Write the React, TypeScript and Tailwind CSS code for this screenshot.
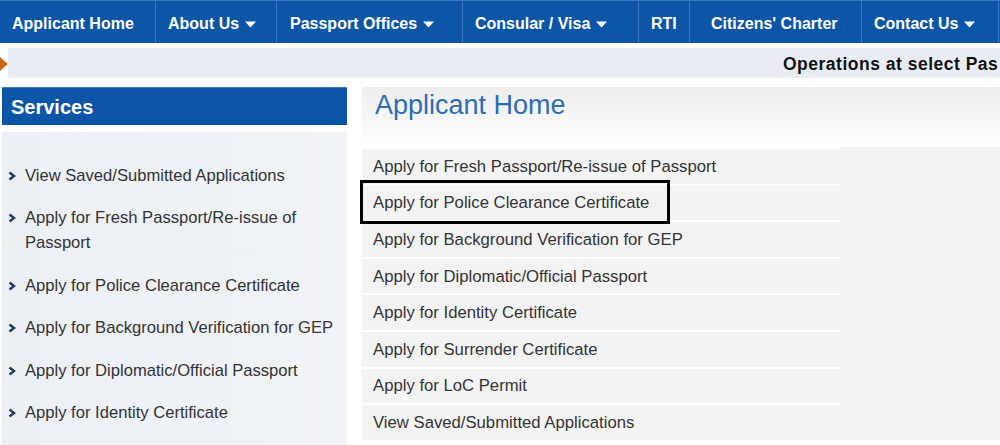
import React from "react";

const NAV = [
  { label: "Applicant Home", w: "w-[156px]", caret: false, pad: "pl-[12px]" },
  { label: "About Us", w: "w-[121px]", caret: true, pad: "pl-[12px]" },
  { label: "Passport Offices", w: "w-[186px]", caret: true, pad: "pl-[13px]" },
  { label: "Consular / Visa", w: "w-[176px]", caret: true, pad: "pl-[12px]" },
  { label: "RTI", w: "w-[51px]", caret: false, pad: "pl-[12px]" },
  { label: "Citizens' Charter", w: "w-[172px]", caret: false, pad: "pl-[21px]" },
  { label: "Contact Us", w: "w-[137px]", caret: true, pad: "pl-[12px]" },
];

const SIDE = [
  "View Saved/Submitted Applications",
  "Apply for Fresh Passport/Re-issue of Passport",
  "Apply for Police Clearance Certificate",
  "Apply for Background Verification for GEP",
  "Apply for Diplomatic/Official Passport",
  "Apply for Identity Certificate",
];

const ROWS = [
  "Apply for Fresh Passport/Re-issue of Passport",
  "Apply for Police Clearance Certificate",
  "Apply for Background Verification for GEP",
  "Apply for Diplomatic/Official Passport",
  "Apply for Identity Certificate",
  "Apply for Surrender Certificate",
  "Apply for LoC Permit",
  "View Saved/Submitted Applications",
];

function Caret() {
  return (
    <svg width="11" height="7" viewBox="0 0 11 7" className="ml-[6px] mt-[1px]">
      <path d="M0 0.5 H11 L5.5 6.5 Z" fill="#ffffff" />
    </svg>
  );
}

function Chevron() {
  return (
    <svg width="8" height="10" viewBox="0 0 8 10" className="shrink-0 mt-[8px]">
      <path d="M1.5 1.5 L6 5 L1.5 8.5" fill="none" stroke="#1f3b6a" strokeWidth="2.4" />
    </svg>
  );
}

export default function App() {
  return (
    <div className="w-[1000px] h-[445px] overflow-hidden bg-white font-['Liberation_Sans',Arial,sans-serif] text-[#333]">
      {/* Top nav */}
      <nav className="flex h-[43px] bg-[#0c55a7] border-t border-[#3a78c0]">
        {NAV.map((n) => (
          <div
            key={n.label}
            className={`${n.w} ${n.pad} pt-[3px] flex items-center shrink-0 border-r border-[#3d78bd] text-white font-bold text-[16px]`}
          >
            {n.label}
            {n.caret && <Caret />}
          </div>
        ))}
      </nav>

      {/* Ticker */}
      <div className="flex items-center mt-[5px] h-[30px]">
        <svg width="8" height="16" viewBox="0 0 8 16" className="shrink-0 mt-[2px]">
          <path d="M0 1 L8 8 L0 15 Z" fill="#c8661f" />
        </svg>
        <div className="flex-1 h-full bg-[#e8edf3] flex items-center pl-[775px] pt-[3px] whitespace-nowrap overflow-hidden">
          <span className="font-bold text-[17.5px] tracking-[0.5px] text-[#111]">Operations at select Pas</span>
        </div>
      </div>

      <div className="flex mt-[9px]">
        {/* Services sidebar */}
        <aside className="w-[345px] ml-[2px] shrink-0">
          <div className="h-[38px] bg-[#0c55a7] border-t border-[#3a78c0] flex items-center pl-[9px] pt-[1px] text-white font-bold text-[20px]">
            Services
          </div>
          <div className="mt-[7px] h-[320px] bg-gradient-to-r from-[#ecf0f5] to-[#f1f3f6] pt-[31px] flex flex-col gap-[17.4px]">
            {SIDE.map((s) => (
              <div key={s} className="flex gap-[9px] pl-[6px] pr-[6px]">
                <Chevron />
                <span className="text-[16.6px] leading-[25px]">{s}</span>
              </div>
            ))}
          </div>
        </aside>

        {/* Main */}
        <main className="flex-1 ml-[15px] h-[353px] flex flex-col">
          <div className="h-[60px] bg-gradient-to-b from-[#eeeeee] via-[#f6f6f6] to-[#ffffff] pl-[13px] pt-[1px]">
            <h1 className="text-[27px] leading-[34px] text-[#2e6cb5]">Applicant Home</h1>
          </div>
          <div className="relative flex-1 bg-[#f3f3f3]">
            <div className="w-[478px]">
              {ROWS.map((r) => (
                <div key={r} className="h-[36.6px] flex items-center pl-[11px] border-t-2 border-white text-[16.7px]">
                  {r}
                </div>
              ))}
            </div>
            <div className="absolute left-[-2px] top-[33px] w-[310px] h-[44px] border-[3px] border-black" />
          </div>
        </main>
      </div>
    </div>
  );
}
